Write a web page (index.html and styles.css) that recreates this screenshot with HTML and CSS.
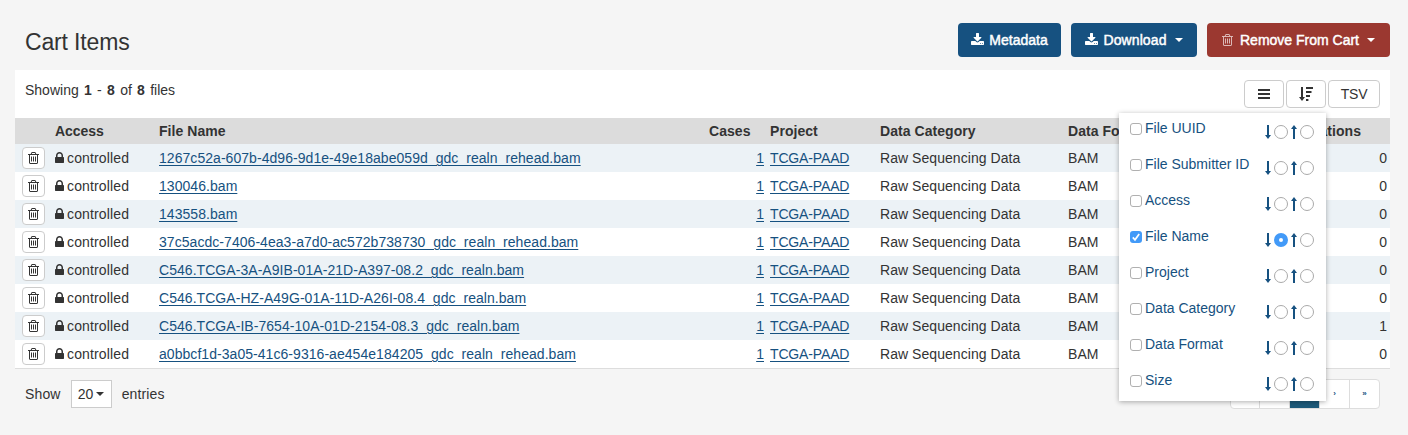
FILE: index.html
```html
<!DOCTYPE html>
<html lang="en">
<head>
<meta charset="utf-8">
<title>Cart Items</title>
<link rel="stylesheet" href="styles.css">
</head>
<body>
<svg class="defs" aria-hidden="true">
  <symbol id="download" viewBox="64 0 1664 1792"><path d="M1344 1344q0-26-19-45t-45-19-45 19-19 45 19 45 45 19 45-19 19-45zm256 0q0-26-19-45t-45-19-45 19-19 45 19 45 45 19 45-19 19-45zm128-224v320q0 40-28 68t-68 28h-1472q-40 0-68-28t-28-68v-320q0-40 28-68t68-28h465l135 136q58 56 136 56t136-56l136-136h464q40 0 68 28t28 68zm-325-569q17 41-14 70l-448 448q-18 19-45 19t-45-19l-448-448q-31-29-14-70 17-39 59-39h256v-448q0-26 19-45t45-19h256q26 0 45 19t19 45v448h256q42 0 59 39z"/></symbol>
  <symbol id="trash" viewBox="192 0 1408 1792"><path d="M704 736v576q0 14-9 23t-23 9h-64q-14 0-23-9t-9-23v-576q0-14 9-23t23-9h64q14 0 23 9t9 23zm256 0v576q0 14-9 23t-23 9h-64q-14 0-23-9t-9-23v-576q0-14 9-23t23-9h64q14 0 23 9t9 23zm256 0v576q0 14-9 23t-23 9h-64q-14 0-23-9t-9-23v-576q0-14 9-23t23-9h64q14 0 23 9t9 23zm128 724v-948h-896v948q0 22 7 40.5t14.5 27 10.5 8.5h832q3 0 10.5-8.5t14.5-27 7-40.5zm-672-1076h448l-48-117q-7-9-17-11h-317q-10 2-17 11zm928 32v64q0 14-9 23t-23 9h-96v948q0 83-47 143.5t-113 60.5h-832q-66 0-113-58.5t-47-141.5v-952h-96q-14 0-23-9t-9-23v-64q0-14 9-23t23-9h309l70-167q15-37 54-63t79-26h320q40 0 79 26t54 63l70 167h309q14 0 23 9t9 23z"/></symbol>
  <symbol id="lock" viewBox="320 0 1152 1792"><path d="M640 768h512v-192q0-106-75-181t-181-75-181 75-75 181v192zm832 96v576q0 40-28 68t-68 28h-960q-40 0-68-28t-28-68v-576q0-40 28-68t68-28h32v-192q0-184 132-316t316-132 316 132 132 316v192h32q40 0 68 28t28 68z"/></symbol>
  <symbol id="down" viewBox="0 0 6 14"><path d="M2 0h2v10h2L3 14 0 10h2z"/></symbol>
  <symbol id="up" viewBox="0 0 6 14"><path d="M2 14h2V4h2L3 0 0 4h2z"/></symbol>
  <symbol id="bars" viewBox="0 0 12 10"><path d="M0 0h12v2H0zM0 4h12v2H0zM0 8h12v2H0z"/></symbol>
  <symbol id="sort" viewBox="0 0 14 14"><path d="M2 0h2v10h2L3 14 0 10h2zM7 0h7v2H7zM7 4h5.5v2H7zM7 8h4v2H7zM7 12h2.4v2H7z"/></symbol>
</svg>

<main class="cart">
  <header class="cart-head">
    <h1 class="title">Cart Items</h1>
    <div class="actions">
      <button class="btn metadata"><svg class="i-download"><use href="#download"/></svg><span>Metadata</span></button>
      <button class="btn download"><svg class="i-download"><use href="#download"/></svg><span>Download</span><i class="caret"></i></button>
      <button class="btn remove"><svg class="i-trash"><use href="#trash"/></svg><span>Remove From Cart</span><i class="caret"></i></button>
    </div>
  </header>

  <section class="toolbar">
    <p class="showing">Showing <b>1</b> - <b>8</b> of <b>8</b> files</p>
    <div class="tools">
      <button class="tool"><svg class="i-bars"><use href="#bars"/></svg></button>
      <div class="sorter">
        <button class="tool"><svg class="i-sort"><use href="#sort"/></svg></button>
        <ul class="menu">
          <li class="option"><i class="check"></i><span class="label">File UUID</span><svg class="arrow"><use href="#down"/></svg><i class="radio"></i><svg class="arrow"><use href="#up"/></svg><i class="radio"></i></li>
          <li class="option"><i class="check"></i><span class="label">File Submitter ID</span><svg class="arrow"><use href="#down"/></svg><i class="radio"></i><svg class="arrow"><use href="#up"/></svg><i class="radio"></i></li>
          <li class="option"><i class="check"></i><span class="label">Access</span><svg class="arrow"><use href="#down"/></svg><i class="radio"></i><svg class="arrow"><use href="#up"/></svg><i class="radio"></i></li>
          <li class="option"><i class="check on"><svg class="tick" viewBox="0 0 12 12"><path d="M2.8 6.4 5 8.8 9.2 3"/></svg></i><span class="label">File Name</span><svg class="arrow"><use href="#down"/></svg><i class="radio on"></i><svg class="arrow"><use href="#up"/></svg><i class="radio"></i></li>
          <li class="option"><i class="check"></i><span class="label">Project</span><svg class="arrow"><use href="#down"/></svg><i class="radio"></i><svg class="arrow"><use href="#up"/></svg><i class="radio"></i></li>
          <li class="option"><i class="check"></i><span class="label">Data Category</span><svg class="arrow"><use href="#down"/></svg><i class="radio"></i><svg class="arrow"><use href="#up"/></svg><i class="radio"></i></li>
          <li class="option"><i class="check"></i><span class="label">Data Format</span><svg class="arrow"><use href="#down"/></svg><i class="radio"></i><svg class="arrow"><use href="#up"/></svg><i class="radio"></i></li>
          <li class="option"><i class="check"></i><span class="label">Size</span><svg class="arrow"><use href="#down"/></svg><i class="radio"></i><svg class="arrow"><use href="#up"/></svg><i class="radio"></i></li>
        </ul>
      </div>
      <button class="tool tsv">TSV</button>
    </div>
  </section>

  <section class="files">
    <div class="row head"><span></span><span class="access-head">Access</span><span>File Name</span><span>Cases</span><span>Project</span><span>Data Category</span><span>Data Format</span><span class="notes">Annotations</span></div>
    <div class="row"><button class="del"><svg class="i-trash"><use href="#trash"/></svg></button><span class="access"><svg class="i-lock"><use href="#lock"/></svg>controlled</span><span><a>1267c52a-607b-4d96-9d1e-49e18abe059d_gdc_realn_rehead.bam</a></span><span class="num"><a>1</a></span><span><a class="proj">TCGA-PAAD</a></span><span>Raw Sequencing Data</span><span>BAM</span><span class="notes">0</span></div>
    <div class="row"><button class="del"><svg class="i-trash"><use href="#trash"/></svg></button><span class="access"><svg class="i-lock"><use href="#lock"/></svg>controlled</span><span><a>130046.bam</a></span><span class="num"><a>1</a></span><span><a class="proj">TCGA-PAAD</a></span><span>Raw Sequencing Data</span><span>BAM</span><span class="notes">0</span></div>
    <div class="row"><button class="del"><svg class="i-trash"><use href="#trash"/></svg></button><span class="access"><svg class="i-lock"><use href="#lock"/></svg>controlled</span><span><a>143558.bam</a></span><span class="num"><a>1</a></span><span><a class="proj">TCGA-PAAD</a></span><span>Raw Sequencing Data</span><span>BAM</span><span class="notes">0</span></div>
    <div class="row"><button class="del"><svg class="i-trash"><use href="#trash"/></svg></button><span class="access"><svg class="i-lock"><use href="#lock"/></svg>controlled</span><span><a>37c5acdc-7406-4ea3-a7d0-ac572b738730_gdc_realn_rehead.bam</a></span><span class="num"><a>1</a></span><span><a class="proj">TCGA-PAAD</a></span><span>Raw Sequencing Data</span><span>BAM</span><span class="notes">0</span></div>
    <div class="row"><button class="del"><svg class="i-trash"><use href="#trash"/></svg></button><span class="access"><svg class="i-lock"><use href="#lock"/></svg>controlled</span><span><a>C546.TCGA-3A-A9IB-01A-21D-A397-08.2_gdc_realn.bam</a></span><span class="num"><a>1</a></span><span><a class="proj">TCGA-PAAD</a></span><span>Raw Sequencing Data</span><span>BAM</span><span class="notes">0</span></div>
    <div class="row"><button class="del"><svg class="i-trash"><use href="#trash"/></svg></button><span class="access"><svg class="i-lock"><use href="#lock"/></svg>controlled</span><span><a>C546.TCGA-HZ-A49G-01A-11D-A26I-08.4_gdc_realn.bam</a></span><span class="num"><a>1</a></span><span><a class="proj">TCGA-PAAD</a></span><span>Raw Sequencing Data</span><span>BAM</span><span class="notes">0</span></div>
    <div class="row"><button class="del"><svg class="i-trash"><use href="#trash"/></svg></button><span class="access"><svg class="i-lock"><use href="#lock"/></svg>controlled</span><span><a>C546.TCGA-IB-7654-10A-01D-2154-08.3_gdc_realn.bam</a></span><span class="num"><a>1</a></span><span><a class="proj">TCGA-PAAD</a></span><span>Raw Sequencing Data</span><span>BAM</span><span class="notes">1</span></div>
    <div class="row"><button class="del"><svg class="i-trash"><use href="#trash"/></svg></button><span class="access"><svg class="i-lock"><use href="#lock"/></svg>controlled</span><span><a>a0bbcf1d-3a05-41c6-9316-ae454e184205_gdc_realn_rehead.bam</a></span><span class="num"><a>1</a></span><span><a class="proj">TCGA-PAAD</a></span><span>Raw Sequencing Data</span><span>BAM</span><span class="notes">0</span></div>
  </section>

  <footer class="foot">
    <div class="entries"><span>Show</span><button class="size">20<i class="caret"></i></button><span>entries</span></div>
    <nav class="pages"><a>«</a><a>‹</a><a class="current">1</a><a>›</a><a>»</a></nav>
  </footer>
</main>
</body>
</html>
```

FILE: styles.css
```css
* { box-sizing: border-box; }
body {
  margin: 0;
  height: 435px;
  overflow: hidden;
  background: #f5f5f5;
  color: #333;
  font: 14px/20px "Liberation Sans", Arial, sans-serif;
}
.defs { display: none; }
svg { display: block; flex: none; fill: currentColor; }
button { font: inherit; color: inherit; margin: 0; padding: 0; display: flex; align-items: center; justify-content: center; }
.cart { width: 1375px; margin-left: 15px; }

.cart-head { height: 70px; padding: 23px 0 0 10px; display: flex; justify-content: space-between; }
.title { margin: 6px 0 0; font-size: 23px; line-height: 26px; font-weight: 400; letter-spacing: -.15px; }
.actions { display: flex; gap: 10px; }
.btn { height: 34px; border: 0; border-radius: 4px; background: #165180; color: #fff; -webkit-text-stroke: .45px #fff; }
.btn .i-download { width: 13px; height: 14px; margin-right: 5px; }
.metadata { width: 103px; }
.download { width: 126px; }
.download span { letter-spacing: .1px; }
.remove { width: 183px; background: #9b3830; }
.remove .i-trash { margin-right: 7px; opacity: .65; }
.i-trash { width: 11px; height: 14px; }
.caret { width: 0; height: 0; border: 4.5px solid transparent; border-top-color: currentColor; border-bottom: 0; }
.btn .caret { margin-left: 8px; }

.toolbar { height: 48px; background: #fff; padding: 10px 10px 0; display: flex; justify-content: space-between; }
.showing { margin: 0; white-space: pre; word-spacing: 1.4px; }
.tools { display: flex; gap: 2px; }
.tool { width: 40px; height: 28px; background: #fff; border: 1px solid #ccc; border-radius: 4px; }
.tsv { width: 52px; letter-spacing: -.2px; }
.i-bars { width: 12px; height: 10px; }
.i-sort { width: 14px; height: 14px; }
.sorter { position: relative; }
.menu {
  position: absolute; top: 33px; right: 0; z-index: 2;
  width: 207px; height: 288px; margin: 0; padding: 0 12px 0 11px;
  list-style: none; background: #fff; color: #165180;
  box-shadow: 0 1px 5px rgba(0,0,0,.32);
}
.option { height: 36px; display: flex; align-items: center; padding-top: 2px; }
.check { width: 12px; height: 12px; margin: -7px 3px 0 0; border: 1px solid #b0b0b0; border-radius: 3px; background: #fff; }
.check.on { border: 0; background: #429af8; }
.tick { width: 12px; height: 12px; fill: none; stroke: #fff; stroke-width: 1.7; }
.label { flex: 1; margin-top: -9px; }
.arrow { width: 6px; height: 14px; }
.radio { width: 14px; height: 14px; margin: 0 3px; border: 1px solid #aaa; border-radius: 50%; background: #fff; }
.radio:last-child { margin-right: 0; }
.radio.on { border: 5px solid #429af8; }

.files { border-bottom: 1px solid #ddd; }
.row {
  height: 28px; background: #fff; display: grid; align-items: center;
  grid-template-columns: 33px 104px 550px 61px 110px 188px 200px 1fr;
  padding: 0 3px 0 7px; letter-spacing: .05px; white-space: nowrap;
}
.row:nth-child(even) { background: #ecf2f6; }
.row.head { height: 26px; background: #dcdcdc; font-weight: 700; letter-spacing: .05px; }
.access-head { letter-spacing: -.05px; }
.num { text-align: right; padding-right: 6px; }
.notes { text-align: right; }
.head .notes { padding-right: 26px; }
.del { width: 23px; height: 22px; border: 1px solid #ccc; border-radius: 4px; background: #fff; }
.access { display: flex; align-items: center; gap: 3px; letter-spacing: .15px; }
.i-lock { width: 9px; height: 14px; }
.row a { color: #165180; text-decoration: underline; text-decoration-thickness: 1px; text-underline-offset: 2px; }
.row .proj { letter-spacing: -.15px; }

.foot { padding: 10px 10px 0; display: flex; justify-content: space-between; }
.entries { display: flex; align-items: center; height: 30px; gap: 10px; letter-spacing: .15px; }
.size { width: 41px; height: 28px; background: #fff; border: 1px solid #ccc; gap: 3px; }
.pages { width: 150px; height: 30px; display: grid; grid-template-columns: 28px repeat(4, 30px); border: 1px solid #ddd; border-radius: 4px; overflow: hidden; background: #fff; }
.pages a { display: flex; align-items: center; justify-content: center; border-left: 1px solid #ddd; font-size: 8px; font-weight: 700; color: #165180; }
.pages a:first-child { border-left: 0; }
.pages .current { background: #1d5a7a; color: #fff; }
```
